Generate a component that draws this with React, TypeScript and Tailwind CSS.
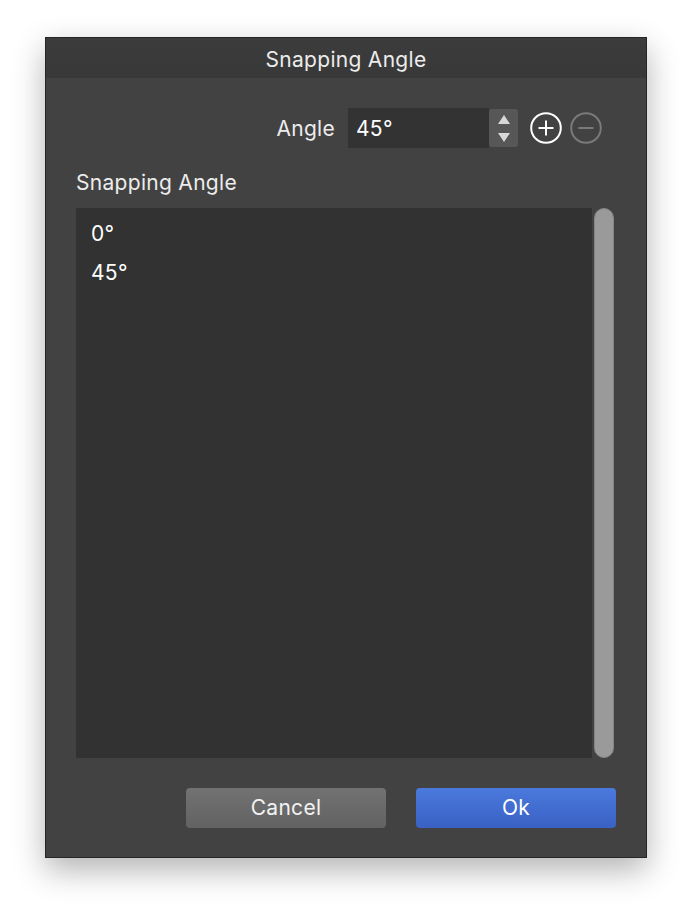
import React from 'react'

const angles = ['0°', '45°']

function CircleButton({ kind, enabled }: { kind: 'plus' | 'minus'; enabled: boolean }) {
  const color = enabled ? '#ffffff' : '#7a7a7a'
  return (
    <svg width="32" height="32" viewBox="0 0 32 32" className="shrink-0">
      <circle cx="16" cy="16" r="14.8" fill="none" stroke={color} strokeWidth="2" />
      <line x1="8.5" y1="16" x2="23.5" y2="16" stroke={color} strokeWidth="2" />
      {kind === 'plus' && <line x1="16" y1="8.5" x2="16" y2="23.5" stroke={color} strokeWidth="2" />}
    </svg>
  )
}

export default function App() {
  return (
    <div
      className="w-[692px] h-[912px] bg-white pt-[37px] pl-[45px] text-[21px] tracking-[0.3px]"
      style={{ fontFamily: 'Inter, "Noto Sans", sans-serif' }}
    >
      <div className="w-[602px] h-[821px] flex flex-col bg-[#424242] border border-[#262626] shadow-[0_12px_30px_rgba(0,0,0,0.3)]">
        {/* Title bar */}
        <div className="h-[40px] shrink-0 flex items-center justify-center pt-[3px] bg-gradient-to-b from-[#3c3c3c] to-[#383838] text-[#ececec]">
          Snapping Angle
        </div>

        <div className="flex flex-col pt-[30px] pb-[29px]">
          {/* Angle row */}
          <div className="h-[40px] flex items-center justify-end pr-[44px]">
            <span className="text-[#ececec] mr-[13px] pt-[2px]">Angle</span>
            <div className="w-[141px] h-[40px] bg-[#333333] flex items-center pl-[8px] pt-[2px] text-white">
              45°
            </div>
            <div className="w-[29px] h-[38px] bg-[#575757] rounded-[3px] flex flex-col items-center justify-center gap-[9px]">
              <svg width="12" height="9" viewBox="0 0 12 9">
                <polygon points="6,0 12,9 0,9" fill="#d8d8d8" />
              </svg>
              <svg width="12" height="9" viewBox="0 0 12 9">
                <polygon points="0,0 12,0 6,9" fill="#d8d8d8" />
              </svg>
            </div>
            <div className="ml-[12px] flex items-center gap-[8px]">
              <CircleButton kind="plus" enabled />
              <CircleButton kind="minus" enabled={false} />
            </div>
          </div>

          <div className="mt-[22px] h-[26px] flex items-center pl-[30px] text-[#ececec]">
            Snapping Angle
          </div>

          {/* List + scrollbar */}
          <div className="mt-[12px] h-[550px] flex pl-[30px] gap-[2px]">
            <div className="w-[516px] h-full bg-[#323232] pt-[6px] pl-[15px]">
              {angles.map((a) => (
                <div key={a} className="h-[39px] flex items-center text-white">
                  {a}
                </div>
              ))}
            </div>
            <div className="w-[20px] h-full rounded-[10px] bg-[#9a9a9a] border border-[#858585]" />
          </div>

          {/* Buttons */}
          <div className="mt-[30px] flex justify-end gap-[30px] pr-[30px]">
            <button className="w-[200px] h-[40px] rounded-[4px] bg-gradient-to-b from-[#727272] to-[#626262] text-[#f2f2f2]">
              Cancel
            </button>
            <button className="w-[200px] h-[40px] rounded-[4px] bg-gradient-to-b from-[#4b79dc] to-[#3a61c4] text-white">
              Ok
            </button>
          </div>
        </div>
      </div>
    </div>
  )
}
